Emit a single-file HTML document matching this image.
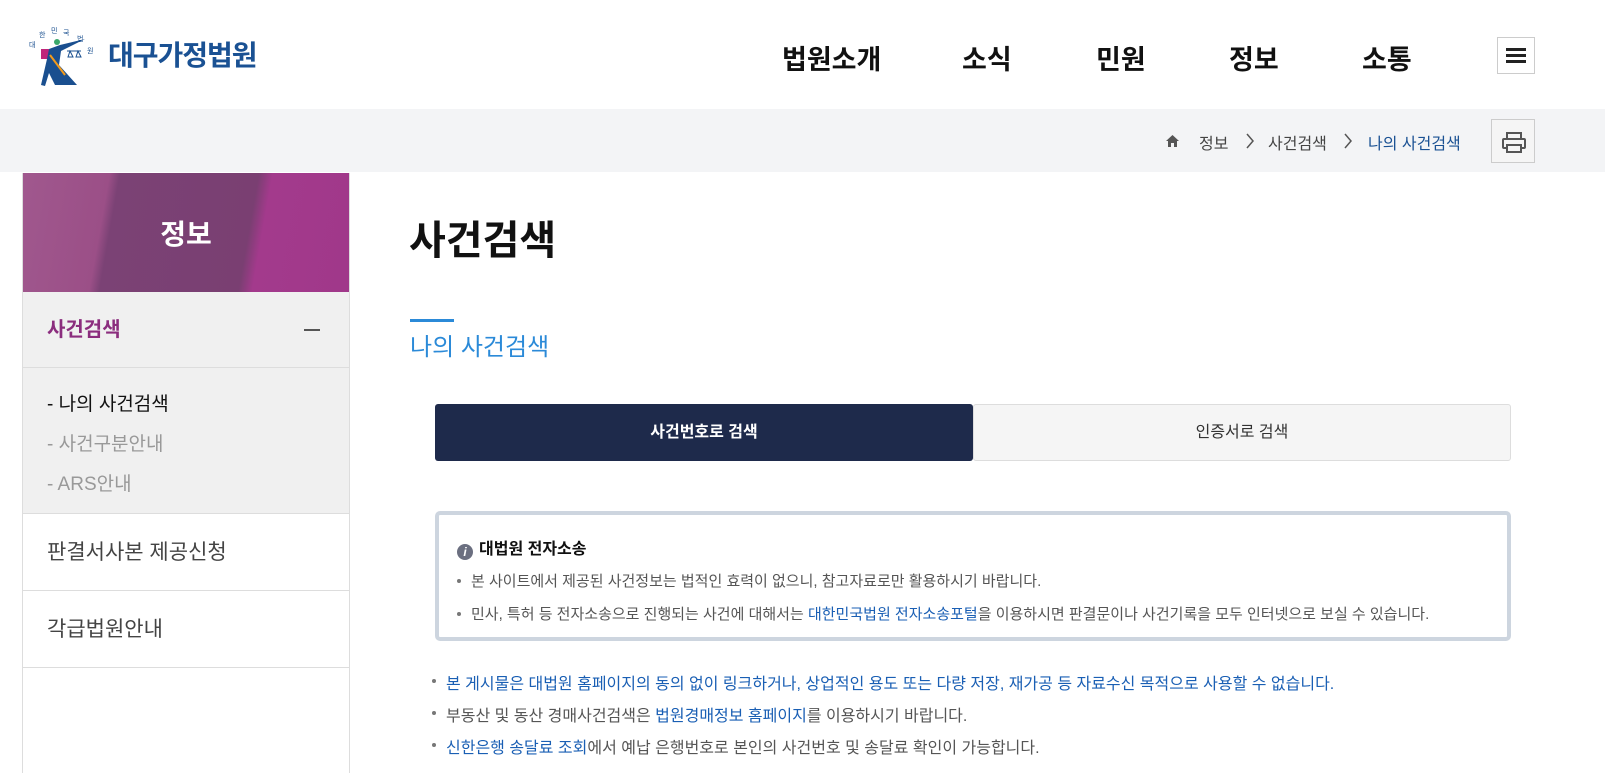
<!DOCTYPE html>
<html><head><meta charset="utf-8"><style>
*{margin:0;padding:0;box-sizing:border-box}
body{width:1605px;height:771px;overflow:hidden;background:#fff;font-family:"Liberation Sans","Noto Sans CJK KR",sans-serif;color:#222;position:relative}
.abs{position:absolute}
.nav span{position:absolute;top:38px;font-size:27px;font-weight:700;color:#111}
.bc{top:109px;left:0;width:1605px;height:63px;background:#f3f4f6}
.side{left:22px;top:173px;width:328px;height:600px;border-left:1px solid #ddd;border-right:1px solid #ddd}
.mi{position:absolute;left:0;width:326px;border-bottom:1px solid #ddd;font-size:21px;color:#444;padding-left:24px}
li{list-style:none}
.ul li{position:relative;padding-left:14px;font-size:15px;color:#555;margin-bottom:14px}
.ul li:before{content:"";position:absolute;left:0;top:9px;width:4px;height:4px;border-radius:2px;background:#777}
.bl{color:#1a5fb4}
</style></head><body>
<svg class="abs" style="left:25px;top:25px" width="70" height="62" viewBox="0 0 70 62">
<text x="4" y="22" font-size="7" fill="#1a4f8f" font-family="Noto Sans CJK KR">대</text>
<text x="14" y="12" font-size="7" fill="#1a4f8f" font-family="Noto Sans CJK KR">한</text>
<text x="26" y="8" font-size="7" fill="#1a4f8f" font-family="Noto Sans CJK KR">민</text>
<text x="38" y="10" font-size="7" fill="#1a4f8f" font-family="Noto Sans CJK KR">국</text>
<text x="52" y="16" font-size="7" fill="#1a4f8f" font-family="Noto Sans CJK KR">법</text>
<text x="62" y="28" font-size="7" fill="#1a4f8f" font-family="Noto Sans CJK KR">원</text>
<rect x="16" y="24" width="8" height="10" fill="#c0267a"/>
<circle cx="32" cy="17" r="3" fill="#3aa86b"/>
<path d="M24 24 L35 20 L60 14 L36 26 L34 40 L52 60 L30 60 L24 48 L20 61 L16 60 L22 34Z" fill="#1a4f8f"/>
<path d="M25 30 L40 50" stroke="#f39a1b" stroke-width="2"/>
<path d="M42 26 h14 M45 26 l-2 6 h5 z M53 26 l-2 6 h5z" stroke="#1a4f8f" stroke-width="1" fill="none"/>
</svg>
<div class="abs" style="left:108px;top:34px;font-size:28px;font-weight:700;color:#1a5193;letter-spacing:-1px">대구가정법원</div>
<div class="nav"><span style="left:782px">법원소개</span><span style="left:962px">소식</span><span style="left:1096px">민원</span><span style="left:1229px">정보</span><span style="left:1362px">소통</span></div>
<div class="abs" style="left:1497px;top:37px;width:38px;height:37px;border:1px solid #ccc;background:#fff">
<div class="abs" style="left:8px;top:10px;width:20px;height:3px;background:#222"></div>
<div class="abs" style="left:8px;top:16px;width:20px;height:3px;background:#222"></div>
<div class="abs" style="left:8px;top:22px;width:20px;height:3px;background:#222"></div></div>
<div class="abs bc"></div>
<svg class="abs" style="left:1165px;top:134px" width="15" height="14" viewBox="0 0 15 14"><path d="M7.5 1 L14 7 H12 V13 H3 V7 H1Z" fill="#555"/><rect x="6" y="9" width="3" height="4" fill="#f3f4f6"/></svg>
<div class="abs" style="left:1199px;top:130px;font-size:16px;color:#444">정보</div>
<svg class="abs" style="left:1245px;top:133px" width="10" height="16" viewBox="0 0 10 16"><path d="M2 1 L8 8 L2 15" fill="none" stroke="#555" stroke-width="1.5"/></svg>
<div class="abs" style="left:1268px;top:130px;font-size:16px;color:#444">사건검색</div>
<svg class="abs" style="left:1343px;top:133px" width="10" height="16" viewBox="0 0 10 16"><path d="M2 1 L8 8 L2 15" fill="none" stroke="#555" stroke-width="1.5"/></svg>
<div class="abs" style="left:1368px;top:130px;font-size:16px;color:#1a5193">나의 사건검색</div>
<div class="abs" style="left:1491px;top:119px;width:44px;height:44px;border:1px solid #ccc;background:#f5f5f5">
<svg width="44" height="44" viewBox="0 0 44 44"><rect x="15" y="13" width="14" height="6" fill="none" stroke="#555" stroke-width="2"/><rect x="11" y="19" width="22" height="9" rx="1" fill="none" stroke="#555" stroke-width="2"/><rect x="15" y="25" width="14" height="7" fill="#f5f5f5" stroke="#555" stroke-width="2"/></svg></div>
<div class="abs side">
<div class="abs" style="left:0;top:0;width:326px;height:119px;background:linear-gradient(100deg,#a0588e 0%,#9b4f87 25%,#7b4275 28%,#7a3f72 68%,#a33a8c 72%,#a0388a 100%)"></div>
<div class="abs" style="left:0;top:40px;width:326px;text-align:center;font-size:28px;font-weight:700;color:#fff">정보</div>
<div class="mi" style="top:119px;height:76px;background:#f0f0f0;line-height:76px;color:#8b2d7e;font-weight:700;font-size:20px">사건검색<span style="position:absolute;left:281px;top:37px;width:16px;height:2px;background:#555"></span></div>
<div class="mi" style="top:195px;height:146px;background:#f0f0f0;font-size:19px;padding-top:17px;line-height:40px;color:#999">
<div style="color:#111">- 나의 사건검색</div><div>- 사건구분안내</div><div>- ARS안내</div></div>
<div class="mi" style="top:341px;height:77px;line-height:77px">판결서사본 제공신청</div>
<div class="mi" style="top:418px;height:77px;line-height:77px">각급법원안내</div>
</div>
<div class="abs" style="left:409px;top:208px;font-size:40px;font-weight:700;color:#111">사건검색</div>
<div class="abs" style="left:410px;top:319px;width:44px;height:3px;background:#2b8ad8"></div>
<div class="abs" style="left:410px;top:327px;font-size:24px;color:#2b8ad8">나의 사건검색</div>
<div class="abs" style="left:435px;top:404px;width:538px;height:57px;background:#1e2a4b;border-radius:3px;color:#fff;font-size:16px;font-weight:700;text-align:center;line-height:57px">사건번호로 검색</div>
<div class="abs" style="left:973px;top:404px;width:538px;height:57px;background:#f5f5f5;border:1px solid #ddd;border-radius:3px;color:#333;font-size:16px;text-align:center;line-height:55px">인증서로 검색</div>
<div class="abs" style="left:435px;top:511px;width:1076px;height:130px;border:4px solid #cdd5df;border-radius:5px;padding:20px 0 0 18px">
<div style="font-size:16px;font-weight:700;color:#111;margin-bottom:10px"><span style="display:inline-block;width:16px;height:16px;border-radius:8px;background:#6b6f80;color:#fff;font-size:12px;text-align:center;line-height:16px;font-style:italic;margin-right:6px;vertical-align:-2px">i</span>대법원 전자소송</div>
<ul class="ul"><li style="margin-bottom:12px">본 사이트에서 제공된 사건정보는 법적인 효력이 없으니, 참고자료로만 활용하시기 바랍니다.</li>
<li>민사, 특허 등 전자소송으로 진행되는 사건에 대해서는 <span class="bl">대한민국법원 전자소송포털</span>을 이용하시면 판결문이나 사건기록을 모두 인터넷으로 보실 수 있습니다.</li></ul></div>
<ul class="ul abs" style="left:432px;top:670px;width:1100px">
<li style="font-size:16px;color:#1a5fb4;margin-bottom:8px">본 게시물은 대법원 홈페이지의 동의 없이 링크하거나, 상업적인 용도 또는 다량 저장, 재가공 등 자료수신 목적으로 사용할 수 없습니다.</li>
<li style="font-size:16px;margin-bottom:8px">부동산 및 동산 경매사건검색은 <span class="bl">법원경매정보 홈페이지</span>를 이용하시기 바랍니다.</li>
<li style="font-size:16px"><span class="bl">신한은행 송달료 조회</span>에서 예납 은행번호로 본인의 사건번호 및 송달료 확인이 가능합니다.</li></ul>
</body></html>
